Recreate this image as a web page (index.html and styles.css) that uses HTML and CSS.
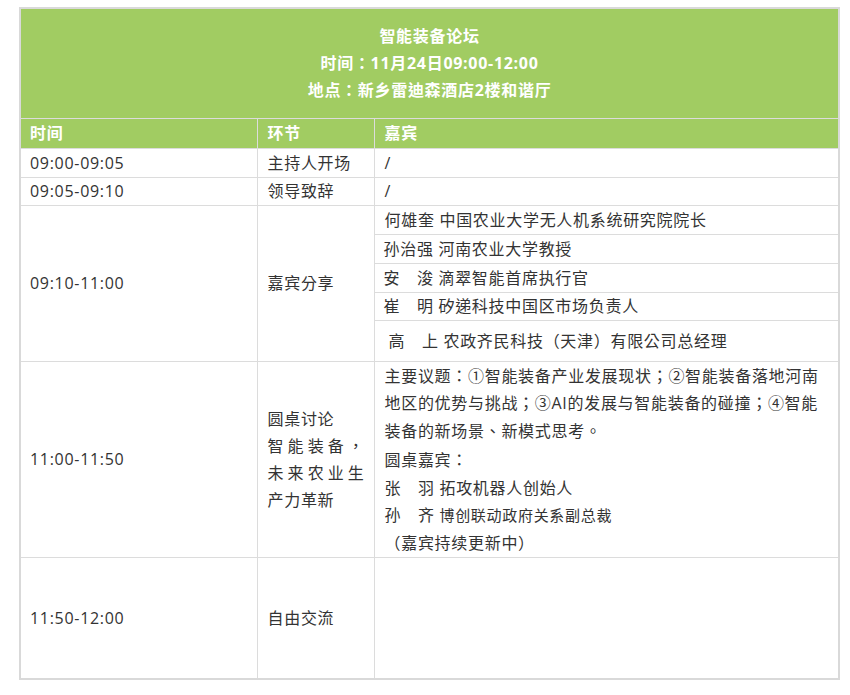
FILE: index.html
```html
<!DOCTYPE html>
<html lang="zh-CN">
<head>
<meta charset="utf-8">
<title>智能装备论坛</title>
<link rel="stylesheet" href="styles.css">
</head>
<body>
<table class="agenda">
  <colgroup>
    <col class="c-time">
    <col class="c-part">
    <col class="c-guest">
  </colgroup>
  <thead>
    <tr class="r-title">
      <th colspan="3" class="title">智能装备论坛<br>时间：11月24日09:00-12:00<br>地点：新乡雷迪森酒店2楼和谐厅</th>
    </tr>
    <tr class="r-head">
      <th>时间</th>
      <th>环节</th>
      <th>嘉宾</th>
    </tr>
  </thead>
  <tbody>
    <tr class="r-short">
      <td>09:00-09:05</td>
      <td>主持人开场</td>
      <td>/</td>
    </tr>
    <tr class="r-short2">
      <td>09:05-09:10</td>
      <td>领导致辞</td>
      <td>/</td>
    </tr>
    <tr class="r-sub">
      <td rowspan="5">09:10-11:00</td>
      <td rowspan="5">嘉宾分享</td>
      <td>何雄奎 中国农业大学无人机系统研究院院长</td>
    </tr>
    <tr class="r-sub">
      <td>孙治强 河南农业大学教授</td>
    </tr>
    <tr class="r-sub">
      <td>安　浚 滴翠智能首席执行官</td>
    </tr>
    <tr class="r-sub2">
      <td>崔　明 矽递科技中国区市场负责人</td>
    </tr>
    <tr class="r-sub-last">
      <td class="indent">高　上 农政齐民科技（天津）有限公司总经理</td>
    </tr>
    <tr class="r-round">
      <td>11:00-11:50</td>
      <td><div class="justify">圆桌讨论<br>智能装备，未来农业生产力革新</div></td>
      <td class="topics">
        <p>主要议题：①智能装备产业发展现状；②智能装备落地河南<br>地区的优势与挑战；③AI的发展与智能装备的碰撞；④智能<br>装备的新场景、新模式思考。</p>
        <p>圆桌嘉宾：<br>张　羽 拓攻机器人创始人<br>孙　齐 <span class="small">博创联动政府关系副总裁</span><br>（嘉宾持续更新中）</p>
      </td>
    </tr>
    <tr class="r-free">
      <td>11:50-12:00</td>
      <td>自由交流</td>
      <td></td>
    </tr>
  </tbody>
</table>
</body>
</html>
```
FILE: styles.css
```css
html, body {
  margin: 0;
  padding: 0;
  background: #ffffff;
}

body {
  padding: 7px 0 0 19px;
  font-family: "Open Sans", "Noto Sans CJK TC", "Noto Sans CJK SC", sans-serif;
  font-feature-settings: "locl" 0;
  font-size: 16px;
  letter-spacing: 0.7px;
  color: #333333;
}

.agenda {
  width: 819px;
  table-layout: fixed;
  border-collapse: collapse;
  border: 2px solid #d9d9d9;
}

.c-time { width: 237px; }
.c-part { width: 117px; }
.c-guest { width: 465px; }

.agenda th,
.agenda td {
  border: 1px solid #dcdcdc;
  padding: 0 9px 0 9px;
  text-align: left;
  vertical-align: middle;
  line-height: 20px;
  box-sizing: border-box;
}

.agenda td:first-child,
.agenda .r-head th:first-child { padding-left: 9px; }

.agenda td + td { padding-left: 10px; }

.agenda thead th {
  background: #a1cc62;
  color: #ffffff;
  font-weight: bold;
}

.agenda th.title {
  text-align: center;
  line-height: 27px;
  height: 110px;
  padding: 0;
}

.r-head th { height: 30px; }
.agenda th + th { padding-left: 10px; }

.r-short td { height: 29px; }
.r-short2 td { height: 28px; }
.r-sub td { height: 29px; }
.r-sub2 td { height: 28px; }
.r-sub-last td { height: 41px; }

.agenda td.indent { padding-left: 14px; }

.justify {
  text-align: justify;
  line-height: 27px;
  width: 97px;
  padding-top: 2px;
}

.agenda td.topics {
  line-height: 27.5px;
  padding-top: 1px;
  padding-bottom: 0;
}

.topics p {
  margin: 0;
}

.topics p + p {
  margin-top: 2px;
}

.small {
  font-size: 15px;
}

.r-free td { height: 121px; }
```
